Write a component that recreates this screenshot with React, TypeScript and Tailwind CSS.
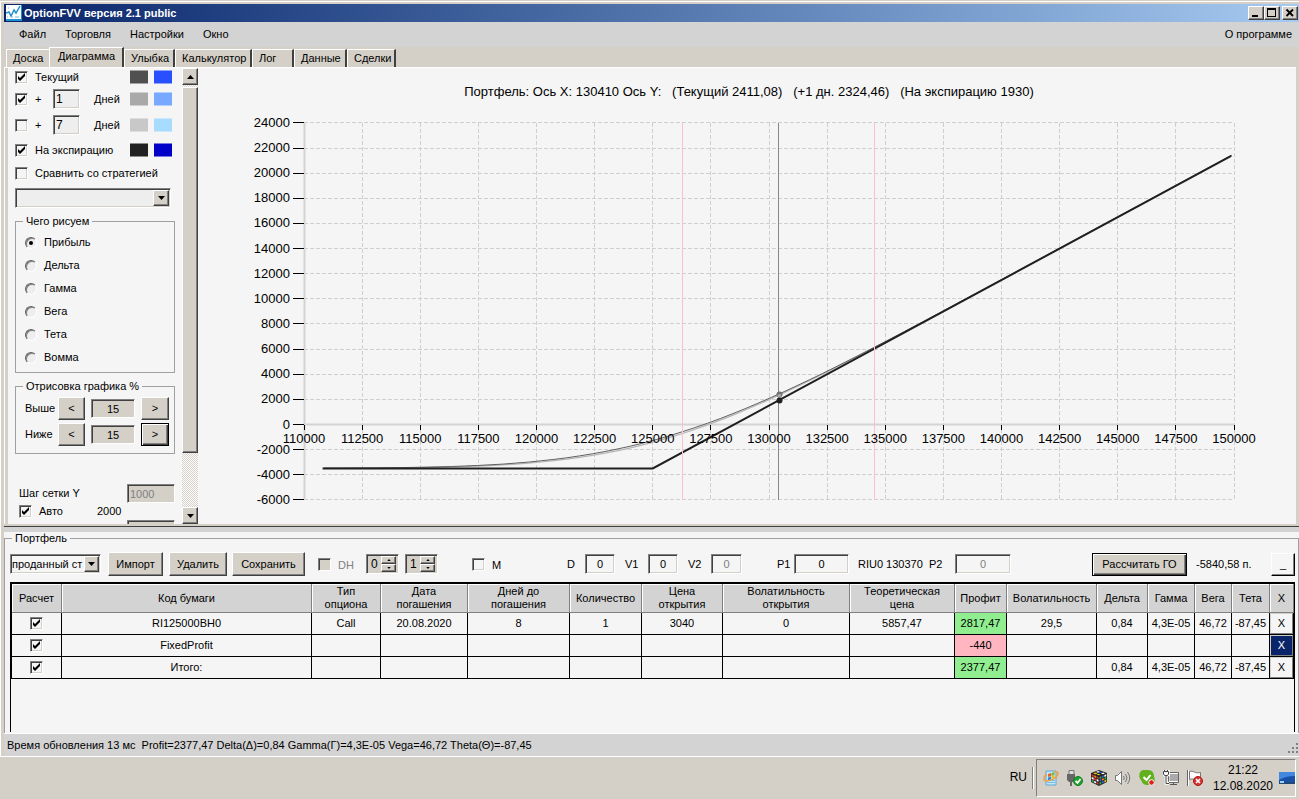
import type { ReactNode } from "react";

const RAISED =
  "border border-t-white border-l-white border-b-[#404040] border-r-[#404040] bg-[#d4d0c8] shadow-[inset_-1px_-1px_0_#808080]";
const SUNKEN =
  "border border-t-[#808080] border-l-[#808080] border-b-white border-r-white shadow-[inset_1px_1px_0_#404040,inset_-1px_-1px_0_#d4d0c8]";
const FOCUSED =
  "border border-black bg-[#d4d0c8] shadow-[inset_1px_1px_0_#fff,inset_-1px_-1px_0_#404040,inset_-2px_-2px_0_#808080]";

function Arrow({ up = false, small = false }: { up?: boolean; small?: boolean }) {
  return (
    <svg viewBox="0 0 7 4" className={small ? "h-[2px] w-[4px]" : "h-[4px] w-[7px]"}>
      <path d={up ? "M3.5 0L7 4H0z" : "M0 0h7L3.5 4z"} fill="#000" />
    </svg>
  );
}

function Check({ id, label, checked = false, disabled = false }: { id?: string; label?: string; checked?: boolean; disabled?: boolean }) {
  return (
    <span className="relative block h-[13px] w-[13px] shrink-0">
      <input
        id={id}
        type="checkbox"
        aria-label={label}
        defaultChecked={checked}
        disabled={disabled}
        className={`peer block h-[13px] w-[13px] appearance-none disabled:bg-[#d4d0c8] ${SUNKEN}`}
      />
      <svg viewBox="0 0 13 13" className="pointer-events-none absolute inset-0 hidden h-[13px] w-[13px] peer-checked:block">
        <path d="M3 5v3l2 2 5-5V2L5 7z" fill="#000" />
      </svg>
    </span>
  );
}

function Group({ title, children, className = "" }: { title: string; children: ReactNode; className?: string }) {
  return (
    <fieldset className={`mr-[23px] border border-[#a0a0a0] ${className}`}>
      <legend className="ml-[7px] h-[13px] px-[3px] leading-[13px]">{title}</legend>
      {children}
    </fieldset>
  );
}

function Swatches({ a, b }: { a: string; b: string }) {
  return (
    <span className="absolute top-1/2 left-[122px] flex -translate-y-1/2 gap-[6px]">
      <i className={`block h-[13px] w-[18px] ${a}`} />
      <i className={`block h-[13px] w-[18px] ${b}`} />
    </span>
  );
}

/* ================= SETTINGS ================= */

const MODES = ["Прибыль", "Дельта", "Гамма", "Вега", "Тета", "Вомма"];

function Stepper({ label, focused = false }: { label: string; focused?: boolean }) {
  return (
    <div className="flex h-[23px] items-center pl-[9px]">
      <span className="w-[33px]">{label}</span>
      <button className={`h-[23px] w-[27px] ${RAISED}`} aria-label={`${label}: меньше`}>&lt;</button>
      <input
        aria-label={label}
        defaultValue="15"
        className={`mx-[6px] h-[19px] w-[44px] bg-[#d4d0c8] text-center ${SUNKEN}`}
      />
      <button className={`h-[23px] w-[28px] ${focused ? FOCUSED : RAISED}`} aria-label={`${label}: больше`}>&gt;</button>
    </div>
  );
}

function DayRow({ id, days, checked, a, b }: { id: string; days: string; checked: boolean; a: string; b: string }) {
  return (
    <div className="relative flex h-[26px] items-center pl-[7px]">
      <Check id={id} checked={checked} />
      <label htmlFor={id} className="w-[25px] pl-[7px]">+</label>
      <input aria-label={`Дней ${days}`} defaultValue={days} className={`h-[20px] w-[27px] bg-[#eee] pl-[2px] text-[12px] ${SUNKEN}`} />
      <span className="pl-[14px]">Дней</span>
      <Swatches a={a} b={b} />
    </div>
  );
}

function Settings() {
  return (
    <aside className="flex w-[190px] shrink-0">
      <div className="relative min-w-0 flex-1 overflow-hidden">
        <div className="w-[190px]">
          <div className="relative flex h-[18px] items-center pl-[7px]">
            <Check id="now" checked />
            <label htmlFor="now" className="pl-[7px]">Текущий</label>
            <Swatches a="bg-[#505050]" b="bg-[#2850ff]" />
          </div>
          <DayRow id="d1" days="1" checked a="bg-[#a9a9a9]" b="bg-[#78a8ff]" />
          <DayRow id="d7" days="7" checked={false} a="bg-[#c8c8c8]" b="bg-[#a8dcff]" />
          <div className="relative flex h-[24px] items-center pl-[7px]">
            <Check id="exp" checked />
            <label htmlFor="exp" className="pl-[7px]">На экспирацию</label>
            <Swatches a="bg-[#202020]" b="bg-[#0000c8]" />
          </div>
          <div className="flex h-[23px] items-center pl-[7px]">
            <Check id="cmp" />
            <label htmlFor="cmp" className="pl-[7px]">Сравнить со стратегией</label>
          </div>
          <div className="relative mt-[3px] ml-[7px] h-[20px] w-[156px]">
            <select aria-label="Стратегия" className={`h-full w-full appearance-none bg-[#eee] ${SUNKEN}`}>
              <option></option>
            </select>
            <span className={`pointer-events-none absolute top-[2px] right-[2px] flex h-[16px] w-[16px] items-center justify-center ${RAISED}`}>
              <Arrow />
            </span>
          </div>

          <Group title="Чего рисуем" className="mt-[7px] ml-[7px] py-[3px]">
            {MODES.map((m, i) => (
              <label key={m} className="flex h-[23px] items-center gap-[7px] pl-[9px]">
                <span className="relative block h-[12px] w-[12px]">
                  <input
                    type="radio"
                    name="mode"
                    defaultChecked={i === 0}
                    className="peer block h-[12px] w-[12px] appearance-none rounded-full border border-t-[#606060] border-r-white border-b-white border-l-[#606060] bg-[#eee] shadow-[inset_1px_1px_0_#808080]"
                  />
                  <i className="pointer-events-none absolute top-[4px] left-[4px] hidden h-[4px] w-[4px] rounded-full bg-black peer-checked:block" />
                </span>
                {m}
              </label>
            ))}
          </Group>

          <Group title="Отрисовка графика %" className="mt-[7px] ml-[7px] pt-[4px] pb-[7px]">
            <div className="flex flex-col gap-[3px]">
              <Stepper label="Выше" />
              <Stepper label="Ниже" focused />
            </div>
          </Group>

          <div className="mt-[30px] flex h-[19px] items-center justify-between pr-[23px] pl-[11px]">
            <label htmlFor="step">Шаг сетки Y</label>
            <input id="step" disabled defaultValue="1000" className={`h-[19px] w-[48px] bg-[#d4d0c8] pl-[2px] text-[11px] text-[#808080] ${SUNKEN}`} />
          </div>
          <div className="flex h-[17px] items-center pl-[11px]">
            <Check id="auto" checked />
            <label htmlFor="auto" className="w-[65px] pl-[7px]">Авто</label>
            <span>2000</span>
          </div>
          <div className="flex justify-end pr-[23px]">
            <input aria-label="Шаг сетки X" disabled className={`h-[19px] w-[48px] bg-[#d4d0c8] ${SUNKEN}`} />
          </div>
        </div>
        {/* scrollbar */}
        <div className="absolute inset-y-0 right-0 flex w-[16px] flex-col bg-[repeating-conic-gradient(#fff_0_25%,#d4d0c8_0_50%)] bg-[length:2px_2px]">
          <button aria-label="Вверх" className={`flex h-[17px] items-center justify-center ${RAISED}`}><Arrow up /></button>
          <div className={`mt-[2px] h-[366px] ${RAISED}`} />
          <button aria-label="Вниз" className={`mt-auto flex h-[17px] items-center justify-center ${RAISED}`}><Arrow /></button>
        </div>
      </div>
    </aside>
  );
}

/* ================= CHART ================= */

const px = (v: number) => 304 + (v - 110000) * 0.02325;
const py = (v: number) => 424.5 - v * 0.012567;

const X_TICKS = Array.from({ length: 17 }, (_, i) => 110000 + i * 2500);
const Y_TICKS = Array.from({ length: 16 }, (_, i) => 24000 - i * 2000);

// upper tail of the normal distribution
function tail(k: number): number {
  if (k < 0) return 1 - tail(-k);
  const t = 1 / (1 + 0.2316419 * k);
  const poly = t * (0.31938153 + t * (-0.356563782 + t * (1.781477937 + t * (-1.821255978 + t * 1.330274429))));
  return (Math.exp((-k * k) / 2) / Math.sqrt(2 * Math.PI)) * poly;
}

function profit(x: number, s: number) {
  const d = x - 125000;
  const k = d / s;
  return d * (1 - tail(k)) + (s * Math.exp((-k * k) / 2)) / Math.sqrt(2 * Math.PI) - 3480;
}

function curve(s: number) {
  const pts: string[] = [];
  for (let x = 110850; x <= 149900; x += 550) pts.push(`${px(x).toFixed(1)},${py(profit(x, s)).toFixed(1)}`);
  return pts.join(" ");
}

function Chart() {
  return (
    <svg viewBox="198 68 1098 456" className="h-full min-w-0 flex-1 font-['Liberation_Sans',Arial,sans-serif] text-[13px]">
      <text x="749" y="96" textAnchor="middle" xmlSpace="preserve">
        {"Портфель: Ось X: 130410 Ось Y:\u00a0\u00a0 (Текущий 2411,08)\u00a0\u00a0 (+1 дн. 2324,46)\u00a0\u00a0 (На экспирацию 1930)"}
      </text>
      <g stroke="#cfcfcf" strokeDasharray="4 2" shapeRendering="crispEdges">
        {X_TICKS.slice(1).map((v) => (
          <line key={v} x1={px(v)} x2={px(v)} y1={py(24000)} y2={py(-6000)} />
        ))}
        {Y_TICKS.map((v) => (
          <line key={v} x1="304" x2="1234" y1={py(v)} y2={py(v)} />
        ))}
      </g>
      <path d="M304.5 122V500M304 424.5H1235" stroke="#d3d3d3" strokeWidth="2" />
      <polyline points={curve(5170)} fill="none" stroke="#b4b4b4" strokeWidth="1.2" />
      <polyline points={curve(5530)} fill="none" stroke="#606060" />
      <polyline
        points={`${px(110800)},${py(-3500)} ${px(125000)},${py(-3500)} ${px(149880)},${py(21380)}`}
        fill="none"
        stroke="#202020"
        strokeWidth="2"
      />
      <path d="M682.5 123V500M874.5 123V500" stroke="#ffc0cb" />
      <path d="M778.5 123V500" stroke="#808890" />
      <g stroke="#000" shapeRendering="crispEdges">
        {X_TICKS.map((v) => (
          <line key={v} x1={px(v)} x2={px(v)} y1="425" y2="430" />
        ))}
        {Y_TICKS.map((v) => (
          <line key={v} x1="293" x2="304" y1={py(v)} y2={py(v)} />
        ))}
      </g>
      <circle cx="779.5" cy="394.5" r="3" fill="#707070" />
      <circle cx="779.5" cy="396" r="2" fill="#a9a9a9" />
      <circle cx="779.5" cy="400.5" r="3" fill="#202020" />
      {X_TICKS.map((v) => (
        <text key={v} x={px(v)} y="443" textAnchor="middle">{v}</text>
      ))}
      {Y_TICKS.map((v) => (
        <text key={v} x="290" y={py(v) + 4} textAnchor="end">{v}</text>
      ))}
    </svg>
  );
}

/* ================= PORTFOLIO ================= */

function Spinner({ value, label }: { value: string; label: string }) {
  return (
    <span className={`flex h-[20px] w-[33px] items-center bg-[#d4d0c8] p-[2px] ${SUNKEN}`}>
      <input aria-label={label} disabled defaultValue={value} className="w-[12px] pl-[2px] text-[12px]" />
      <span className="flex flex-1 flex-col">
        <button aria-label="Больше" className={`flex h-[8px] items-center justify-center ${RAISED}`}><Arrow up small /></button>
        <button aria-label="Меньше" className={`flex h-[8px] items-center justify-center ${RAISED}`}><Arrow small /></button>
      </span>
    </span>
  );
}

function Field({ label, box, width, disabled = false }: { label: string; box: string; width: string; disabled?: boolean }) {
  return (
    <label className="flex items-center">
      <span className={width}>{label}</span>
      <input defaultValue="0" disabled={disabled} className={`h-[20px] text-center disabled:text-[#808080] ${box} ${SUNKEN}`} />
    </label>
  );
}

function Toolbar() {
  return (
    <div className="flex h-[25px] items-center pt-px pr-[3px] pl-[5px] whitespace-nowrap">
      <div className="relative h-[20px] w-[91px] shrink-0">
        <select aria-label="Портфель" className={`h-full w-full appearance-none overflow-hidden bg-[#f5f5f5] pr-[16px] pl-px ${SUNKEN}`}>
          <option>проданный ст</option>
        </select>
        <span className={`pointer-events-none absolute top-[2px] right-[2px] flex h-[16px] w-[15px] items-center justify-center ${RAISED}`}>
          <Arrow />
        </span>
      </div>
      <button className={`ml-[7px] h-[24px] w-[55px] ${RAISED}`}>Импорт</button>
      <button className={`ml-[6px] h-[24px] w-[58px] ${RAISED}`}>Удалить</button>
      <button className={`ml-[5px] h-[24px] w-[73px] ${RAISED}`}>Сохранить</button>
      <div className="ml-[13px] flex w-[48px] items-center gap-[7px]">
        <Check id="dh" disabled />
        <label htmlFor="dh" className="pt-[3px] text-[#808080]">DH</label>
      </div>
      <div className="flex gap-[6px]">
        <Spinner value="0" label="DH 1" />
        <Spinner value="1" label="DH 2" />
      </div>
      <div className="ml-[34px] flex w-[95px] items-center gap-[7px]">
        <Check id="m" />
        <label htmlFor="m" className="pt-[3px]">M</label>
      </div>
      <Field label="D" width="w-[18px]" box="w-[30px]" />
      <div className="ml-[10px]"><Field label="V1" width="w-[23px]" box="w-[30px]" /></div>
      <div className="ml-[10px]"><Field label="V2" width="w-[23px]" box="w-[31px]" disabled /></div>
      <div className="ml-[35px]"><Field label="P1" width="w-[17px]" box="w-[55px]" /></div>
      <span className="ml-[9px] w-[71px]">RIU0 130370</span>
      <Field label="P2" width="w-[26px]" box="w-[56px]" disabled />
      <button className={`ml-auto h-[23px] w-[95px] ${FOCUSED}`}>Рассчитать ГО</button>
      <span className="ml-[9px] w-[75px]">-5840,58 п.</span>
      <button aria-label="Свернуть" className="h-[23px] w-[24px] border border-t-white border-r-black border-b-black border-l-white bg-[#f5f5f5] shadow-[inset_-1px_-1px_0_#808080]">_</button>
    </div>
  );
}

const HEADERS = [
  ["Расчет", "w-[50px]"], ["Код бумаги", ""], ["Тип\nопциона", "w-[69px]"], ["Дата\nпогашения", "w-[87px]"],
  ["Дней до\nпогашения", "w-[102px]"], ["Количество", "w-[72px]"], ["Цена\nоткрытия", "w-[81px]"],
  ["Волатильность\nоткрытия", "w-[127px]"], ["Теоретическая\nцена", "w-[105px]"], ["Профит", "w-[52px]"],
  ["Волатильность", "w-[90px]"], ["Дельта", "w-[51px]"], ["Гамма", "w-[47px]"], ["Вега", "w-[37px]"],
  ["Тета", "w-[38px]"], ["X", "w-[24px]"],
];

const ROWS = [
  ["RI125000BH0", "Call", "20.08.2020", "8", "1", "3040", "0", "5857,47", "2817,47", "29,5", "0,84", "4,3E-05", "46,72", "-87,45"],
  ["FixedProfit", "", "", "", "", "", "", "", "-440", "", "", "", "", ""],
  ["Итого:", "", "", "", "", "", "", "", "2377,47", "", "0,84", "4,3E-05", "46,72", "-87,45"],
];

function profitColor(i: number, v: string) {
  if (i !== 8) return "";
  return v.startsWith("-") ? "bg-[#ffb6c1]" : "bg-[#90ee90]";
}

function Positions() {
  return (
    <div className="mr-[3px] ml-[5px] flex-1 border-x border-t-2 border-black">
      <table className="w-full table-fixed border-separate border-spacing-0 border-l border-black text-center">
        <thead>
          <tr className="h-[29px] bg-[#d3d3d3]">
            {HEADERS.map(([h, w]) => (
              <th key={h} className={`border-r border-b border-[#808080] p-0 leading-[13px] font-normal whitespace-pre-line shadow-[inset_1px_1px_0_#fff] ${w}`}>
                {h}
              </th>
            ))}
          </tr>
        </thead>
        <tbody>
          {ROWS.map((row, r) => (
            <tr key={row[0]} className="h-[22px]">
              <td className="border-r border-b border-black p-0">
                <div className="flex justify-center"><Check label={row[0]} checked /></div>
              </td>
              {row.map((v, i) => (
                <td key={i} className={`border-r border-b border-black p-0 whitespace-nowrap ${profitColor(i, v)}`}>{v}</td>
              ))}
              <td className="border-r border-b border-black p-0">
                <button
                  aria-label={`Удалить ${row[0]}`}
                  className={`block h-[21px] w-full border border-t-[#d4d0c8] border-r-[#808080] border-b-[#808080] border-l-[#d4d0c8] ${r === 1 ? "bg-[#0a246a] text-white" : "bg-[#f5f5f5]"}`}
                >
                  X
                </button>
              </td>
            </tr>
          ))}
        </tbody>
      </table>
    </div>
  );
}

/* ================= TASKBAR ================= */

function Tray() {
  return (
    <div className="flex items-center gap-[8px]">
      <svg viewBox="0 0 16 16" className="h-4 w-4">
        <path d="M3 1h10v14H3z" fill="#c5e8f8" stroke="#58a8d8" />
        <path d="M4 10.500h8M4 12.500h8" stroke="#78b8e0" />
        <path d="M5 4l3-1v3l-3 1z" fill="#e86030" /><path d="M8.500 3l3-1v3l-3 1z" fill="#70b840" />
        <path d="M5 7.500l3-1v3l-3 1z" fill="#3888d0" /><path d="M8.500 6l3-1v3l-3 1z" fill="#e8c030" />
        <path d="M11 2c5-1 5 2 2 5S1 13 1 9s2-4 3-4" fill="none" stroke="#f0a040" strokeWidth="1.500" />
      </svg>
      <svg viewBox="0 0 16 16" className="h-4 w-4">
        <path d="M2 .5h5v4H2z" fill="#ddd" stroke="#777" /><path d="M0 4h8v6l-2 2H2l-2-2z" fill="#666" />
        <path d="M4 12v4" stroke="#666" strokeWidth="2" />
        <circle cx="11" cy="11" r="4.500" fill="#20a030" stroke="#108020" />
        <path d="M8.500 11l2 2 3-4" fill="none" stroke="#fff" strokeWidth="1.800" />
      </svg>
      <svg viewBox="0 0 16 16" className="h-4 w-4">
        <path d="M8 0l8 3v9l-8 4-8-4V3z" fill="#222" />
        <path d="M5 2l2-1 2 .7-2 1z" fill="#fff" /><path d="M9.500 1.500l2 .8-2 1-2-.8z" fill="#3060d0" />
        <path d="M2 3.200l2-.8 2.500 1-2 .9z" fill="#e8d020" /><path d="M12 2.500l2 .8-2 1-2-.8z" fill="#fff" />
        <path d="M7 3.700l2.500.8L8 5.200l-2.500-.8z" fill="#e8d020" />
        <path d="M.7 4.300l2 .8v2l-2-.8z" fill="#e03030" /><path d="M3.200 5.200l2 .8v2l-2-.8z" fill="#f08020" /><path d="M5.700 6.200l1.800.8v2l-1.800-.8z" fill="#e03030" />
        <path d="M.7 7l2 .8v2L.7 9z" fill="#fff" /><path d="M3.200 8l2 .8v2L3.200 10z" fill="#e03030" /><path d="M5.700 9l1.800.8v2L5.700 11z" fill="#fff" />
        <path d="M.7 9.700l2 .9v1.900l-2-.9z" fill="#30b050" /><path d="M3.200 10.800l2 .9v1.900l-2-.9z" fill="#fff" /><path d="M5.700 11.900l1.800.9v1.900l-1.800-.9z" fill="#e03030" />
        <path d="M8.500 7l1.800-.8v2L8.500 9z" fill="#30b050" /><path d="M10.900 6l1.900-.8v2l-1.900.8z" fill="#3060d0" /><path d="M13.400 5l1.900-.8v2l-1.900.8z" fill="#fff" />
        <path d="M8.500 9.800l1.800-.8v2l-1.800.8z" fill="#3060d0" /><path d="M10.900 8.800l1.900-.8v2l-1.900.8z" fill="#f08020" /><path d="M13.400 7.800l1.900-.8v2l-1.900.8z" fill="#30b050" />
        <path d="M8.500 12.700l1.800-.9v2l-1.800.9z" fill="#30b050" /><path d="M10.900 11.600l1.900-.9v2l-1.900.9z" fill="#3060d0" /><path d="M13.400 10.500l1.900-.9v1.900l-1.900.9z" fill="#e8d020" />
      </svg>
      <svg viewBox="0 0 16 16" className="h-4 w-4" fill="none" stroke="#777">
        <path d="M.5 5.500h2l4-4v13l-4-4h-2z" fill="#fff" />
        <path d="M8.500 6q1.500 2 0 4M10.500 4q3 4 0 8M12.500 2q4.500 6 0 12" />
      </svg>
      <svg viewBox="0 0 16 16" className="h-4 w-4">
        <path d="M4 0h5c4 0 6 3 6 6l1 5c0 3-3 5-5 4H8c-3 0-5-2-6-5C-1 7 0 1 4 0z" fill="#62b01e" />
        <path d="M4.500 7l3 3 4-5" fill="none" stroke="#fff" strokeWidth="2" />
        <circle cx="12.500" cy="12.500" r="2.800" fill="#e02020" stroke="#fff" />
      </svg>
      <svg viewBox="0 0 16 16" className="h-4 w-4">
        <path d="M6 3.500h9.500v8H6z" fill="#aaa" stroke="#fff" /><path d="M5.500 2.500h10v10h-10z" fill="none" stroke="#666" />
        <path d="M7 14.500h7M10.500 12.500v2" stroke="#555" />
        <path d="M.5 0v5h5V0M3 5v8.500h3" fill="#eee" stroke="#fff" strokeWidth="2.500" />
        <path d="M.5 1.500h5v2.500l-1 1.500h-3L.5 4zM1.500 0v1.500M4.500 0v1.500M3 5.500v8h3" fill="none" stroke="#444" />
      </svg>
      <svg viewBox="0 0 16 16" className="h-4 w-4">
        <path d="M.5 0v16" stroke="#666" /><path d="M1.500 0v16" stroke="#fff" />
        <path d="M2.500 1.500c4-1.500 5 2.500 11 1v7c-4 2-7-2-11 0z" fill="#fff" stroke="#777" />
        <circle cx="11" cy="11" r="4.500" fill="#d83030" stroke="#a81818" />
        <path d="M9 9l4 4M13 9l-4 4" stroke="#fff" strokeWidth="1.600" />
      </svg>
    </div>
  );
}

const TABS = [
  ["Доска", "w-[43px]"], ["Диаграмма", "w-[75px]"], ["Улыбка", "w-[51px]"], ["Калькулятор", "w-[77px]"],
  ["Лог", "w-[42px]"], ["Данные", "w-[53px]"], ["Сделки", "w-[49px]"],
];

export default function App() {
  return (
    <div className="flex h-screen flex-col overflow-hidden bg-[#d4d0c8] font-['Liberation_Sans',Arial,sans-serif] text-[11px] leading-[13px] text-black">
      <div className="flex min-h-0 flex-1 flex-col pt-px">
        <div className="flex min-h-0 flex-1 flex-col border-t border-l border-white pt-[2px] pl-[3px]">
          <header className="flex h-[18px] shrink-0 items-center bg-linear-to-r from-[#0a246a] to-[#a6caf0] pl-[2px]">
            <svg viewBox="0 0 16 16" className="h-4 w-4">
              <path d="M0 0h16v16H0z" fill="#2090d0" /><path d="M0 0h15v14H0z" fill="#fff" />
              <path d="M0 8l3-1 2 4 3-6 2 3 4-7" fill="none" stroke="#2090d0" strokeWidth="1.500" />
              <path d="M1 12h1M5 12h2M9 12h4M2 3h1" stroke="#70b8e0" />
            </svg>
            <h1 className="pl-[2px] font-bold text-white">OptionFVV версия 2.1 public</h1>
            <div className="ml-auto flex h-[14px] pr-px">
              <button aria-label="Свернуть окно" className={`h-[14px] w-[16px] ${RAISED}`}>
                <svg viewBox="0 0 14 12" className="h-[12px] w-[14px]"><path d="M3 8h6v2H3z" /></svg>
              </button>
              <button aria-label="Развернуть окно" className={`h-[14px] w-[16px] ${RAISED}`}>
                <svg viewBox="0 0 14 12" className="h-[12px] w-[14px]"><path d="M2 1h9v9H2zM3 3v6h7V3z" fillRule="evenodd" /></svg>
              </button>
              <button aria-label="Закрыть окно" className={`ml-[2px] h-[14px] w-[16px] ${RAISED}`}>
                <svg viewBox="0 0 14 12" className="h-[12px] w-[14px]"><path d="M3.500 2.500l6.500 6.500M10 2.500L3.500 9" stroke="#000" strokeWidth="1.800" /></svg>
              </button>
            </div>
          </header>

          <nav className="flex h-[25px] shrink-0 items-center gap-[19px] bg-[#d3d3d3] pr-[7px] pl-[15px]">
            <button>Файл</button>
            <button>Торговля</button>
            <button>Настройки</button>
            <button>Окно</button>
            <button className="ml-auto">О программе</button>
          </nav>

          <div role="tablist" className="flex h-[20px] shrink-0 items-end pl-[2px]">
            {TABS.map(([t, w], i) => (
              <button
                key={t}
                role="tab"
                aria-selected={i === 1}
                className={`border-t border-l border-white border-r-[#404040] text-left ${i === 0 ? "" : "border-r-2"} ${i === 1 ? "h-[20px] pb-[2px] pl-[8px]" : "h-[18px] pl-[6px]"} ${w}`}
              >
                {t}
              </button>
            ))}
          </div>

          <main className="mr-[3px] flex min-h-0 flex-1 border-t border-l border-white pl-[3px]">
            <div className="flex min-h-0 min-w-0 flex-1 bg-[#f5f5f5]">
              <Settings />
              <Chart />
            </div>
          </main>
          <div className="h-[8px] shrink-0 bg-[#d3d3d3]">
            <div className="h-[3px] border-b border-[#404040] bg-[#d4d0c8]" />
          </div>

          <section className="h-[201px] shrink-0 bg-[#f5f5f5]">
            <fieldset className="flex h-full min-w-0 flex-col border border-b-0 border-[#a0a0a0]">
              <legend className="ml-[7px] h-[13px] px-[3px] leading-[13px]">Портфель</legend>
              <div className="flex h-[187px] flex-col pt-[6px]">
                <Toolbar />
                <div className="h-[6px]" />
                <Positions />
              </div>
            </fieldset>
          </section>
          <footer className="flex h-[23px] shrink-0 items-center justify-between border-t border-white bg-[#d3d3d3] pl-[3px]">
            <span className="whitespace-pre">Время обновления 13 мс  Profit=2377,47 Delta(Δ)=0,84 Gamma(Г)=4,3E-05 Vega=46,72 Theta(Θ)=-87,45</span>
            <svg viewBox="0 0 12 12" className="mt-[6px] h-3 w-3" fill="#808080">
              <path d="M9 1h2v2H9zM9 5h2v2H9zM9 9h2v2H9zM5 5h2v2H5zM5 9h2v2H5zM1 9h2v2H1z" />
            </svg>
          </footer>
        </div>
      </div>

      <div className="flex h-[43px] shrink-0 items-center justify-end border-t border-white pr-[3px] pb-px text-[12px]">
        <span className="pr-[5px]">RU</span>
        <span className="mr-[2px] h-[22px] w-[2px] border-r border-l border-r-white border-l-[#808080]" />
        <div className="flex h-[38px] items-center border border-t-[#808080] border-l-[#808080] border-r-white border-b-white pl-[6px]">
          <Tray />
          <time className="flex w-[76px] flex-col pl-[4px] text-center leading-[16px]">
            <span>21:22</span>
            <span>12.08.2020</span>
          </time>
          <svg viewBox="0 0 16 16" className="h-4 w-4">
            <path d="M0 2h16v11H0z" fill="#1850a8" /><path d="M0 2h16v4Q6 6 0 10z" fill="#4088e0" />
            <path d="M0 12h16v2H0z" fill="#204878" /><path d="M1 11h4v2H1z" fill="#a0d0f8" />
          </svg>
        </div>
      </div>
    </div>
  );
}
